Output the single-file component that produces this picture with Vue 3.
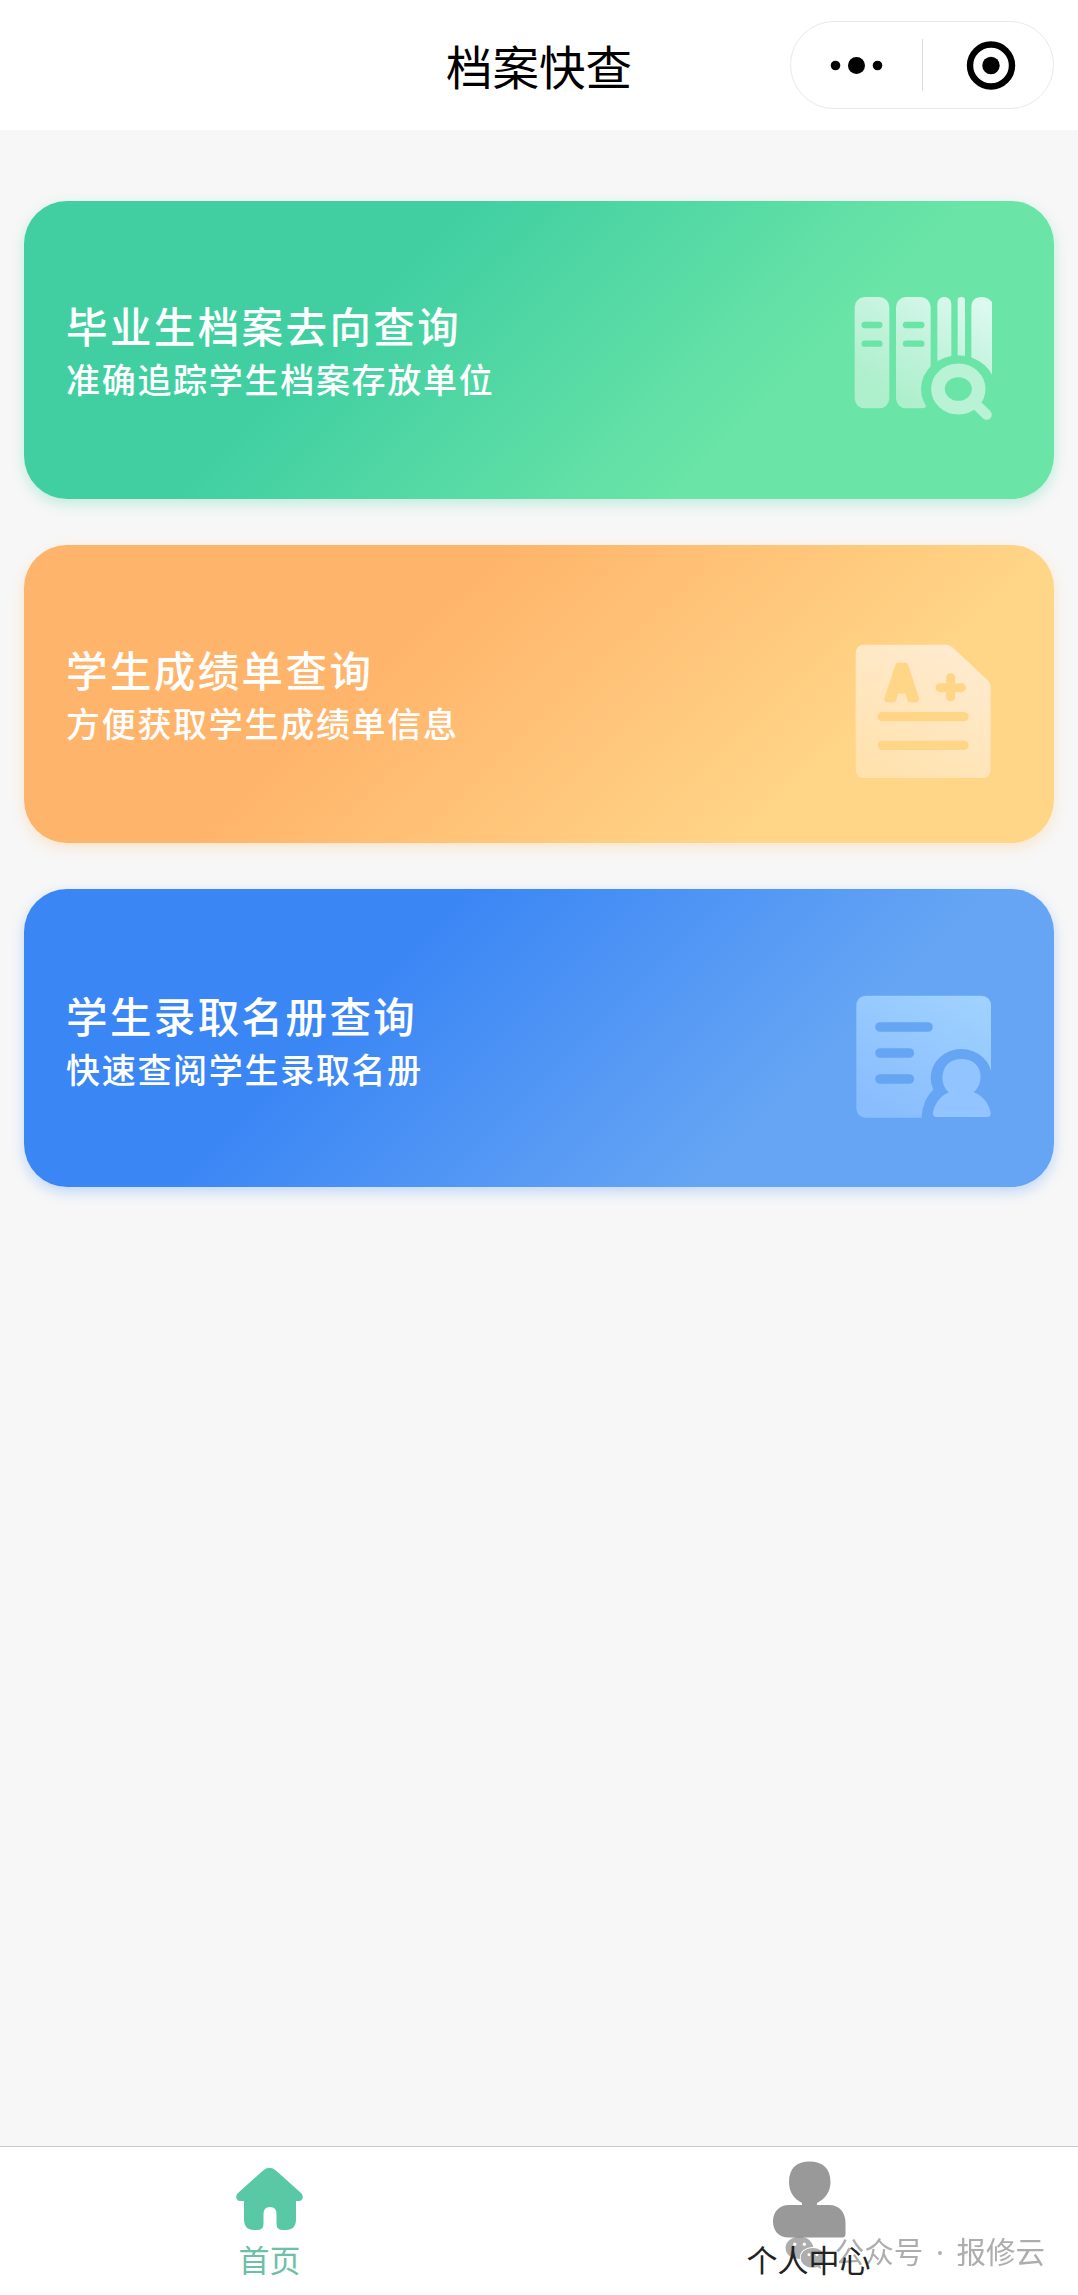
<script setup>
import { ref } from 'vue'

const active = ref('home')

const cards = [
    { id: 'archive', title: '毕业生档案去向查询', desc: '准确追踪学生档案存放单位', viewBox: '0 0 600 540' },
    { id: 'score', title: '学生成绩单查询', desc: '方便获取学生成绩单信息', viewBox: '0 -18 600 540' },
    { id: 'roster', title: '学生录取名册查询', desc: '快速查阅学生录取名册', viewBox: '0 -36 600 540' }
]
</script>

<template>
    <div class="page">
        <header class="header">
            <h1 class="header-title">档案快查</h1>
            <div class="capsule">
                <svg class="capsule-more" viewBox="0 0 131 86">
                    <circle cx="44.5" cy="43.5" r="4.8"/>
                    <circle cx="65.5" cy="43.5" r="8.5"/>
                    <circle cx="86.5" cy="43.5" r="4.8"/>
                </svg>
                <i class="capsule-line"/>
                <svg class="capsule-close" viewBox="0 0 130 86">
                    <circle cx="68" cy="43.5" r="21" fill="none" stroke="#000" stroke-width="6.4"/>
                    <circle cx="68" cy="43.5" r="8.7"/>
                </svg>
            </div>
        </header>

        <main class="list">
            <div v-for="card in cards" :key="card.id" class="card" :class="card.id">
                <div class="card-text">
                    <div class="card-title">{{ card.title }}</div>
                    <div class="card-desc">{{ card.desc }}</div>
                </div>
                <svg class="card-icon" :viewBox="card.viewBox">
                    <template v-if="card.id === 'archive'">
                        <defs>
                            <linearGradient id="archive-fill" gradientUnits="userSpaceOnUse" x1="480" y1="100" x2="300" y2="420">
                                <stop offset="0" stop-color="#dcf9f0"/>
                                <stop offset="0.5" stop-color="#c3f3dc"/>
                                <stop offset="1" stop-color="#aeefcc"/>
                            </linearGradient>
                            <mask id="archive-mask">
                                <rect width="600" height="540" fill="#fff"/>
                                <path d="M134 165H178M134 221H178M258 165H304M258 221H304" stroke="#000" stroke-width="19" stroke-linecap="round"/>
                                <ellipse cx="415" cy="357" rx="112" ry="101" fill="#000"/>
                                <path d="M340 400H530V440H340z" fill="#000"/>
                            </mask>
                        </defs>
                        <g mask="url(#archive-mask)" fill="url(#archive-fill)">
                            <rect x="104" y="81" width="104" height="334" rx="30"/>
                            <rect x="228" y="81" width="104" height="334" rx="30"/>
                            <rect x="352" y="81" width="42" height="250" rx="20"/>
                            <rect x="413" y="81" width="22" height="250" rx="10"/>
                            <path d="M454 113Q454 81 485 81Q504 81 516 96V340H454z"/>
                        </g>
                        <ellipse cx="415" cy="357" rx="61" ry="56" fill="none" stroke="#b9f2d5" stroke-width="41"/>
                        <path d="M470 405L500 434" stroke="#b9f2d5" stroke-width="31" stroke-linecap="round"/>
                    </template>
                    <template v-else-if="card.id === 'score'">
                        <defs>
                            <linearGradient id="score-fill" x1="0.8" y1="0" x2="0.3" y2="1">
                                <stop offset="0" stop-color="#ffebd1"/>
                                <stop offset="1" stop-color="#ffe2ae"/>
                            </linearGradient>
                        </defs>
                        <path d="M132 74H376Q390 74 400 84L502 180Q512 189 512 202V448Q512 474 486 474H132Q107 474 107 448V100Q107 74 132 74z" fill="url(#score-fill)"/>
                        <text class="grade" x="199" y="237" textLength="94" lengthAdjust="spacingAndGlyphs">A</text>
                        <g stroke="#ffd688" fill="none" stroke-linecap="round">
                            <path d="M360 203H424M392 173V231" stroke-width="27"/>
                            <path d="M187 290H432M187 376H432" stroke-width="28"/>
                        </g>
                    </template>
                    <template v-else>
                        <defs>
                            <linearGradient id="roster-fill" x1="0.9" y1="0" x2="0.3" y2="1">
                                <stop offset="0" stop-color="#a0d2ff"/>
                                <stop offset="1" stop-color="#89bdfd"/>
                            </linearGradient>
                            <mask id="roster-mask">
                                <rect width="600" height="540" fill="#fff"/>
                                <path d="M180 171H324M180 249H268M180 327H268" stroke="#000" stroke-width="29" stroke-linecap="round"/>
                                <ellipse cx="424" cy="323" rx="92" ry="86" fill="#000"/>
                                <path d="M304 445Q308 386 344 355L400 340L530 300V460H304z" fill="#000"/>
                            </mask>
                        </defs>
                        <rect x="109" y="77" width="404" height="366" rx="28" fill="url(#roster-fill)" mask="url(#roster-mask)"/>
                        <path d="M387 367C356 345 358 267 424 267C491 267 495 340 461 367C486 376 506 398 512 428Q513 441 500 441H350Q337 441 339 426C346 397 364 376 387 367z" fill="#92c5ff"/>
                    </template>
                </svg>
            </div>
        </main>

        <nav class="tabbar">
            <div class="tab" :class="{ active: active === 'home' }" @click="active = 'home'">
                <svg class="tab-icon" viewBox="0 0 90 84">
                    <path d="M37.500 14Q44.500 7.500 51.500 14L76 36Q78.500 38.500 77.500 41.500T73 44H71V62Q71 73 61 73H58Q51.500 73 51.500 67V57Q51.500 50 45 50T38.500 57V67Q38.500 73 32 73H29Q19 73 19 62V44H16Q12.500 44.500 11.500 41.500T13 36z" fill="#58c9a4"/>
                </svg>
                <span class="tab-label">首页</span>
            </div>
            <div class="tab" :class="{ active: active === 'mine' }" @click="active = 'mine'">
                <svg class="tab-icon" viewBox="0 0 90 84">
                    <path d="M38 49V46C30 42 25 35 25 25C25 11 33 4.500 45.500 4.500S66.500 11 66.500 25C66.500 35 61 42 53 46V48H65C76 48 81.500 56 81.500 66V77Q81.500 80.500 78 80.500H25C14 80.500 9 73 9 64.500C9 55 15 48 25 48H38z" fill="#999"/>
                </svg>
                <span class="tab-label">个人中心</span>
            </div>
        </nav>

        <div class="watermark">
            <svg class="watermark-logo" viewBox="0 0 120 100">
                <path d="M44 2C19 2 1 17 1 36C1 47 7 56 16 62L13 74L27 67Q35 70 45 69C42 48 60 33 85 33C81 14 65 2 44 2z"/>
                <path d="M84 36C62 36 47 49 47 66S62 96 84 96Q91 96 97 94L109 100L106 89C114 84 119 76 119 66C119 49 105 36 84 36z"/>
                <g fill="#fff">
                    <circle cx="29" cy="25" r="5"/>
                    <circle cx="58" cy="25" r="5"/>
                    <circle cx="72" cy="57" r="4.500"/>
                    <circle cx="96" cy="57" r="4.500"/>
                </g>
            </svg>
            <span class="watermark-text">公众号 · 报修云</span>
        </div>
    </div>
</template>

<style>
body {
    background: #f7f7f7;
}
</style>

<style scoped>
.page {
    position: relative;
    display: flex;
    flex-direction: column;
    width: 1078px;
    height: 2295px;
    overflow: hidden;
    background: #f7f7f7;
    font-family: "Noto Sans CJK SC", sans-serif;
}

.header {
    display: grid;
    grid-template-columns: 1fr auto 1fr;
    align-items: center;
    box-sizing: border-box;
    height: 130px;
    padding: 0 24px;
    background: #fff;
}

.header-title {
    grid-column: 2;
    margin: 0;
    font-size: 46.5px;
    font-weight: 400;
    line-height: 70px;
    color: #000;
}

.capsule {
    display: flex;
    align-items: center;
    justify-self: end;
    box-sizing: border-box;
    width: 264px;
    height: 88px;
    border: 1px solid #e9e9e9;
    border-radius: 44px;
}

.capsule-more {
    width: 131px;
    height: 86px;
}

.capsule-line {
    width: 1px;
    height: 52px;
    background: #dcdcdc;
}

.capsule-close {
    width: 130px;
    height: 86px;
}

.list {
    flex: 1;
    display: flex;
    flex-direction: column;
    gap: 46px;
    padding: 71px 24px 0;
}

.card {
    display: flex;
    justify-content: space-between;
    box-sizing: border-box;
    height: 298px;
    padding: 0 34px 0 42px;
    border-radius: 43px;
    color: #fff;

    &.archive {
        background: linear-gradient(135deg, #41cfa2 34%, #6ae4a7 71%);
        box-shadow: 0 5px 14px rgba(67, 208, 163, 0.3);
    }

    &.score {
        background: linear-gradient(137deg, #ffb46b 36%, #ffd688 78%);
        box-shadow: 0 5px 14px rgba(255, 190, 110, 0.3);
    }

    &.roster {
        background: linear-gradient(135deg, #3a86f5 33%, #66a5f4 73%);
        box-shadow: 0 5px 14px rgba(66, 139, 247, 0.3);
    }
}

.card-text {
    padding-top: 95px;
    white-space: nowrap;
}

.card-title {
    font-size: 41.5px;
    font-weight: 500;
    line-height: 58px;
    letter-spacing: 2.4px;
}

.card-desc {
    padding-top: 2px;
    font-size: 34px;
    font-weight: 500;
    line-height: 46px;
    letter-spacing: 1.7px;
}

.roster .card-text {
    padding-top: 97px;
}

.card-icon {
    width: 200px;
    height: 180px;
    margin-top: 69px;
}

.grade {
    font-family: "Liberation Sans", sans-serif;
    font-size: 145px;
    font-weight: 700;
    fill: #ffd688;
    stroke: #ffd688;
    stroke-width: 19px;
    stroke-linejoin: round;
}

.tabbar {
    display: flex;
    box-sizing: border-box;
    height: 149px;
    border-top: 1px solid #c8c8c8;
    background: #fff;
}

.tab {
    flex: 1;
    display: flex;
    flex-direction: column;
    align-items: center;
    padding-top: 10px;
    font-size: 31px;
    line-height: 36px;
    color: #222;
    cursor: pointer;

    &.active {
        color: #6cc0a5;
    }
}

.tab-icon {
    width: 90px;
    height: 84px;
}

/* labels stay readable above the account mark */
.tab-label {
    position: relative;
    z-index: 2;
}

/* account mark floating over the tab bar */
.watermark {
    position: absolute;
    z-index: 1;
    right: 33px;
    bottom: 21px;
    display: flex;
    align-items: center;
    gap: 10px;
    font-size: 29.5px;
    line-height: 44px;
    color: #777;
    opacity: 0.6;
    pointer-events: none;
}

/* Latin face first keeps the middle dot narrow */
.watermark-text {
    font-family: "Noto Sans", "Noto Sans CJK SC", sans-serif;
    word-spacing: 5px;
}

.watermark-logo {
    width: 40px;
    height: 33px;
    fill: #777;
}
</style>
